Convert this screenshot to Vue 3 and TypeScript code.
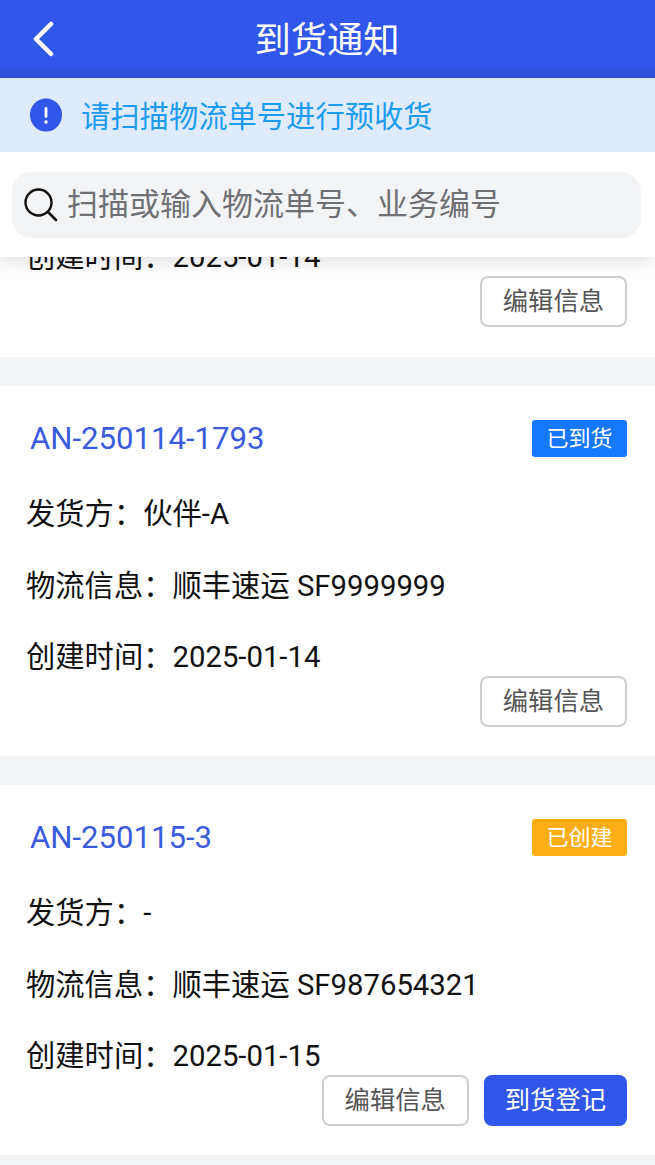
<template>
  <div class="page">
    <div class="top">
      <header class="nav">
        <svg class="back" width="24" height="36" viewBox="0 0 24 36">
          <path d="M20 3 L5 18 L20 33" fill="none" stroke="#fff" stroke-width="4.5" stroke-linecap="round" stroke-linejoin="round" />
        </svg>
        <span class="nav-title">到货通知</span>
      </header>
      <div class="notice">
        <svg class="notice-icon" width="32" height="34" viewBox="0 0 32 34">
          <ellipse cx="16" cy="17" rx="16" ry="16.5" fill="#3056ea" />
          <rect x="14.6" y="9" width="2.8" height="11" rx="1.4" fill="#fff" />
          <circle cx="16" cy="24" r="1.7" fill="#fff" />
        </svg>
        <span class="notice-text">请扫描物流单号进行预收货</span>
      </div>
      <div class="search-wrap">
        <div class="search">
          <svg class="search-icon" width="36" height="36" viewBox="0 0 36 36">
            <circle cx="15.5" cy="15.5" r="13" fill="none" stroke="#111" stroke-width="2.4" />
            <path d="M25 25 L33 33" stroke="#111" stroke-width="2.6" stroke-linecap="round" />
          </svg>
          <span class="placeholder">扫描或输入物流单号、业务编号</span>
        </div>
      </div>
    </div>

    <div class="list">
      <section class="card partial">
        <div class="row">创建时间：2025-01-14</div>
        <div class="actions">
          <button class="btn">编辑信息</button>
        </div>
      </section>
      <section v-for="item in items" :key="item.code" class="card">
        <div class="card-head">
          <span class="code">{{ item.code }}</span>
          <span class="badge" :class="item.badgeClass">{{ item.status }}</span>
        </div>
        <div class="row first">发货方：{{ item.sender }}</div>
        <div class="row">物流信息：{{ item.logistics }}</div>
        <div class="row">创建时间：{{ item.created }}</div>
        <div class="actions">
          <button class="btn">编辑信息</button>
          <button v-if="item.canRegister" class="btn primary">到货登记</button>
        </div>
      </section>
    </div>
  </div>
</template>

<script setup lang="ts">
interface Notice {
  code: string
  status: string
  badgeClass: string
  sender: string
  logistics: string
  created: string
  canRegister: boolean
}

const items: Notice[] = [
  { code: 'AN-250114-1793', status: '已到货', badgeClass: 'arrived', sender: '伙伴-A', logistics: '顺丰速运 SF9999999', created: '2025-01-14', canRegister: false },
  { code: 'AN-250115-3', status: '已创建', badgeClass: 'created', sender: '-', logistics: '顺丰速运 SF987654321', created: '2025-01-15', canRegister: true },
]
</script>

<style>
body {
  margin: 0;
  background: #f3f4f6;
}
</style>

<style scoped>
.page {
  width: 655px;
  height: 1165px;
  overflow: hidden;
  background: #f3f4f6;
  font-family: Roboto, "Noto Sans CJK SC", sans-serif;
}
.top {
  position: relative;
  z-index: 2;
  height: 257px;
  background: #fff;
  box-shadow: 0 4px 16px rgba(0, 0, 0, 0.13);
}
.nav {
  position: relative;
  height: 78px;
  display: flex;
  align-items: center;
  justify-content: center;
  background: linear-gradient(to bottom, #3056ea 0, #3056ea 66px, #2f4fd2 78px);
}
.back {
  position: absolute;
  left: 31px;
  top: 21px;
}
.nav-title {
  margin: 4px 0 0 -1px;
  color: #fff;
  font-size: 36.3px;
  line-height: 78px;
}
.notice {
  height: 74px;
  display: flex;
  align-items: center;
  gap: 19px;
  padding-left: 30px;
  background: #deebfc;
  color: #1c9bf0;
  font-size: 29.3px;
}
.notice-text {
  padding-bottom: 2px;
}
.search-wrap {
  padding: 20px 14px 0 12px;
}
.search {
  height: 66px;
  display: flex;
  align-items: center;
  gap: 8px;
  padding-left: 11px;
  border-radius: 20px;
  background: #f3f4f6;
}
.placeholder {
  padding-bottom: 8px;
  color: #6f7073;
  font-size: 31px;
  white-space: nowrap;
}
.list {
  margin-top: -20.5px;
  display: flex;
  flex-direction: column;
  gap: 29.2px;
}
.card {
  height: 370px;
  flex: none;
  box-sizing: border-box;
  padding: 34px 28px 29px 26px;
  background: #fff;
}
.card.partial {
  height: 120.5px;
  padding-top: 0;
}
.card.partial .row {
  margin-top: 0;
}
.card-head {
  display: flex;
  align-items: center;
  justify-content: space-between;
  height: 37px;
}
.code {
  margin-left: 4px;
  color: #3a5bdc;
  font-size: 31.1px;
}
.badge {
  width: 95px;
  height: 37px;
  border-radius: 3px;
  color: #fff;
  font-size: 22px;
  line-height: 37px;
  text-align: center;
}
.badge.arrived {
  background: #1677ff;
}
.badge.created {
  background: #fdad15;
}
.row {
  margin-top: 30.4px;
  color: #111;
  font-size: 29.3px;
  line-height: 41px;
  white-space: nowrap;
}
.row.first {
  margin-top: 37px;
}
.actions {
  margin-top: -1.8px;
  display: flex;
  justify-content: flex-end;
  gap: 15px;
}
.btn {
  height: 51px;
  box-sizing: border-box;
  padding: 0 21px;
  border: 2px solid #cfcfcf;
  border-radius: 8px;
  background: #fff;
  color: #555;
  font-family: inherit;
  font-size: 25.3px;
  line-height: 1;
}
.btn.primary {
  padding: 0 21px;
  border: none;
  background: #3056ea;
  color: #fff;
}
</style>
